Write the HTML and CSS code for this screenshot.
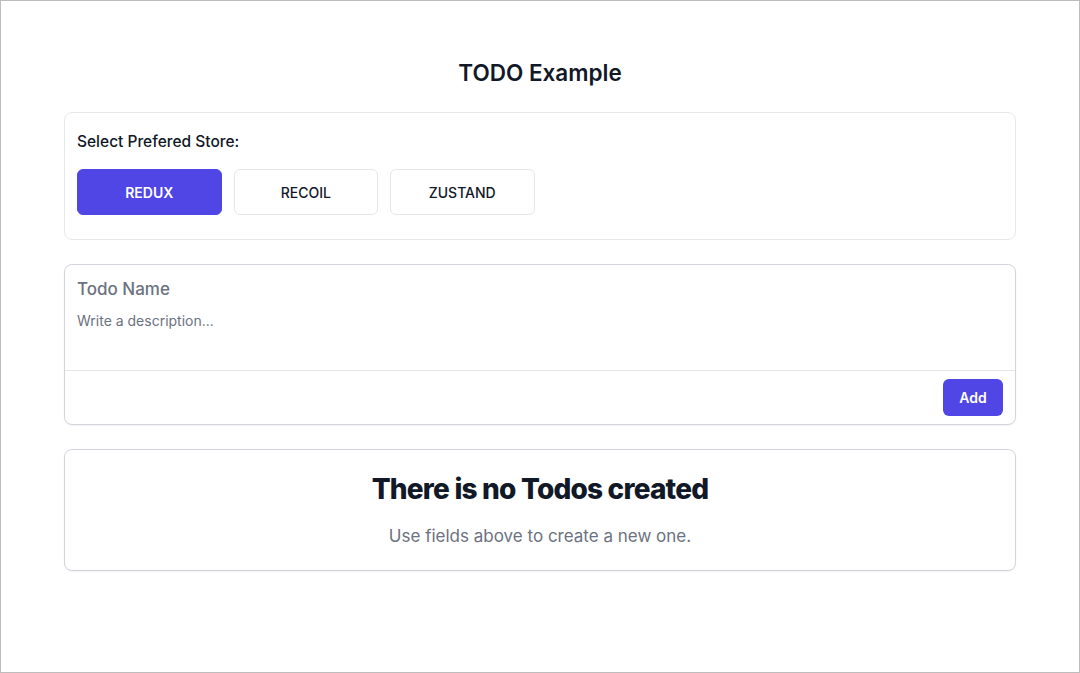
FILE: index.html
```html
<!DOCTYPE html>
<html>
<head>
<meta charset="utf-8">
<link rel="stylesheet" href="styles.css">
</head>
<body>
<div class="frame">
  <main class="page">
    <h1 class="title">TODO Example</h1>
    <section class="card store">
      <div class="store-label">Select Prefered Store:</div>
      <div class="store-buttons">
        <button class="store-btn active">REDUX</button>
        <button class="store-btn">RECOIL</button>
        <button class="store-btn">ZUSTAND</button>
      </div>
    </section>
    <section class="card form">
      <div class="form-body">
        <div class="todo-name">Todo Name</div>
        <div class="todo-desc">Write a description...</div>
      </div>
      <div class="form-footer">
        <button class="add-btn">Add</button>
      </div>
    </section>
    <section class="card empty">
      <h2 class="empty-title">There is no Todos created</h2>
      <p class="empty-sub">Use fields above to create a new one.</p>
    </section>
  </main>
</div>
</body>
</html>
```
FILE: styles.css
```css
* { box-sizing: border-box; }
html, body { margin: 0; padding: 0; background: #fff; }
body { font-family: Inter, "Noto Sans", sans-serif; color: #111827; }
.frame {
  width: 1080px;
  height: 673px;
  border: 1px solid #bdbdbd;
  overflow: hidden;
}
.page {
  width: 952px;
  margin: 0 auto;
  padding-top: 58px;
}
.title {
  margin: 0 0 25px;
  text-align: center;
  font-size: 22.5px;
  line-height: 28px;
  font-weight: 600;
  color: #111827;
}
.card {
  border: 1px solid #e5e7eb;
  border-radius: 8px;
  background: #fff;
}
.store {
  padding: 19px 12px 24px;
  margin-bottom: 24px;
}
.store-label {
  font-size: 15.5px;
  line-height: 20px;
  font-weight: 500;
  color: #111827;
  margin-bottom: 17px;
}
.store-buttons { display: flex; gap: 12px; }
.store-btn {
  width: 144.5px;
  height: 46px;
  border: 1px solid #e5e7eb;
  border-radius: 6px;
  background: #fff;
  font-family: inherit;
  font-size: 14px;
  font-weight: 500;
  color: #111827;
  cursor: pointer;
}
.store-btn.active {
  background: #4f46e5;
  border-color: #4f46e5;
  color: #fff;
  font-weight: 600;
}
.form {
  border-color: #d1d5db;
  box-shadow: 0 1px 2px rgba(0,0,0,0.05);
  margin-bottom: 24px;
}
.form-body {
  padding: 12px 12px 0;
  height: 106px;
  border-bottom: 1px solid #e5e7eb;
}
.todo-name {
  font-size: 17px;
  line-height: 24px;
  font-weight: 500;
  color: #6b7280;
}
.todo-desc {
  margin-top: 10px;
  font-size: 14px;
  line-height: 20px;
  color: #6b7280;
}
.form-footer {
  display: flex;
  justify-content: flex-end;
  padding: 8px 12px 8px;
}
.add-btn {
  width: 60px;
  height: 37px;
  border: none;
  border-radius: 6px;
  background: #4f46e5;
  color: #fff;
  font-family: inherit;
  font-size: 14px;
  font-weight: 600;
}
.empty {
  border-color: #d1d5db;
  box-shadow: 0 1px 2px rgba(0,0,0,0.05);
  text-align: center;
  padding: 21px 12px 23px;
}
.empty-title {
  margin: 0;
  font-size: 28px;
  line-height: 36px;
  font-weight: 800;
  letter-spacing: -0.8px;
  color: #111827;
}
.empty-sub {
  margin: 18px 0 0;
  font-size: 17px;
  line-height: 22px;
  color: #6b7280;
}
```
